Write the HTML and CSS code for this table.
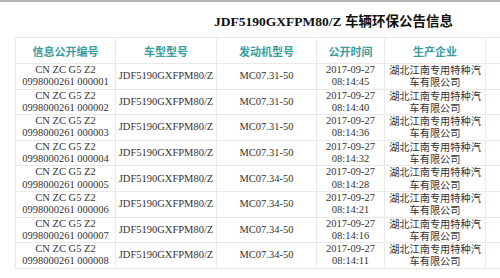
FILE: index.html
```html
<!DOCTYPE html>
<html lang="zh-CN">
<head>
<meta charset="UTF-8">
<title>车辆环保公告信息</title>
<link rel="stylesheet" href="styles.css">
</head>
<body>
<div class="topline"></div>
<div class="wrap">
  <div class="inner">
    <h1 class="title">JDF5190GXFPM80/Z 车辆环保公告信息</h1>
    <table class="info">
      <colgroup>
        <col class="c1"><col class="c2"><col class="c3"><col class="c4"><col class="c5"><col>
      </colgroup>
      <thead>
        <tr>
          <th>信息公开编号</th>
          <th>车型型号</th>
          <th>发动机型号</th>
          <th>公开时间</th>
          <th>生产企业</th>
          <th></th>
        </tr>
      </thead>
      <tbody>
        <tr><td>CN ZC G5 Z2<br>0998000261 000001</td><td>JDF5190GXFPM80/Z</td><td>MC07.31-50</td><td>2017-09-27<br>08:14:45</td><td class="cn">湖北江南专用特种汽车有限公司</td><td></td></tr>
        <tr><td>CN ZC G5 Z2<br>0998000261 000002</td><td>JDF5190GXFPM80/Z</td><td>MC07.31-50</td><td>2017-09-27<br>08:14:40</td><td class="cn">湖北江南专用特种汽车有限公司</td><td></td></tr>
        <tr><td>CN ZC G5 Z2<br>0998000261 000003</td><td>JDF5190GXFPM80/Z</td><td>MC07.31-50</td><td>2017-09-27<br>08:14:36</td><td class="cn">湖北江南专用特种汽车有限公司</td><td></td></tr>
        <tr><td>CN ZC G5 Z2<br>0998000261 000004</td><td>JDF5190GXFPM80/Z</td><td>MC07.31-50</td><td>2017-09-27<br>08:14:32</td><td class="cn">湖北江南专用特种汽车有限公司</td><td></td></tr>
        <tr><td>CN ZC G5 Z2<br>0998000261 000005</td><td>JDF5190GXFPM80/Z</td><td>MC07.34-50</td><td>2017-09-27<br>08:14:28</td><td class="cn">湖北江南专用特种汽车有限公司</td><td></td></tr>
        <tr><td>CN ZC G5 Z2<br>0998000261 000006</td><td>JDF5190GXFPM80/Z</td><td>MC07.34-50</td><td>2017-09-27<br>08:14:21</td><td class="cn">湖北江南专用特种汽车有限公司</td><td></td></tr>
        <tr><td>CN ZC G5 Z2<br>0998000261 000007</td><td>JDF5190GXFPM80/Z</td><td>MC07.34-50</td><td>2017-09-27<br>08:14:16</td><td class="cn">湖北江南专用特种汽车有限公司</td><td></td></tr>
        <tr><td>CN ZC G5 Z2<br>0998000261 000008</td><td>JDF5190GXFPM80/Z</td><td>MC07.34-50</td><td>2017-09-27<br>08:14:11</td><td class="cn">湖北江南专用特种汽车有限公司</td><td></td></tr>
      </tbody>
    </table>
  </div>
</div>
</body>
</html>
```

FILE: styles.css
```css
body {
  margin: 0;
  background: #fff;
  color: #222;
  font-family: "Liberation Serif", "Noto Sans CJK SC", serif;
}

.topline {
  height: 2px;
  background: #b4b4b4;
}

.wrap {
  width: 485px;
  margin-left: 15px;
  overflow: hidden;
}

.inner {
  width: 637px;
}

.title {
  margin: 0;
  padding-top: 10px;
  height: 25px;
  font-size: 13.5px;
  line-height: 20px;
  font-weight: bold;
  text-align: center;
  color: #111;
}

.info {
  width: 100%;
  table-layout: fixed;
  border-collapse: collapse;
}

.c1 { width: 100px; }
.c2 { width: 101px; }
.c3 { width: 100px; }
.c4 { width: 68px; }
.c5 { width: 101px; }

.info th,
.info td {
  border: 1px solid #e9e9e9;
  text-align: center;
  padding: 0 1px;
}

.info th {
  height: 25px;
  font-family: "Noto Sans CJK SC", sans-serif;
  font-size: 11px;
  font-weight: bold;
  color: #3a9d9e;
}

.info td {
  height: 24.6px;
  font-size: 10.5px;
  line-height: 12.3px;
  color: #333;
}

.info td.cn {
  font-family: "Noto Sans CJK SC", sans-serif;
  font-size: 10.2px;
}
```
